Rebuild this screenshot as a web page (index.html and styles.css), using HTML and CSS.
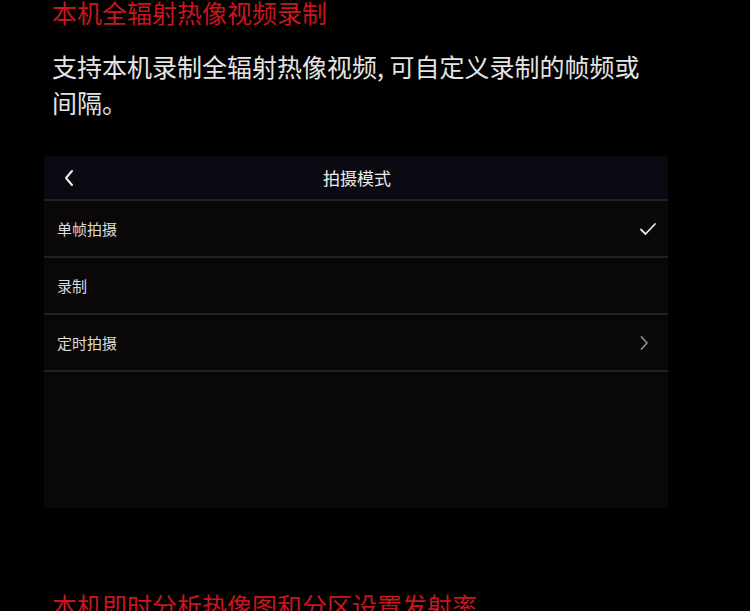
FILE: index.html
```html
<!DOCTYPE html>
<html lang="zh-CN">
<head>
  <meta charset="UTF-8">
  <meta name="viewport" content="width=device-width, initial-scale=1.0">
  <title>本机全辐射热像视频录制</title>
  <link rel="stylesheet" href="styles.css">
</head>
<body>
  <section class="feature first">
    <h2 class="feature-title">本机全辐射热像视频录制</h2>
    <p class="feature-text">支持本机录制全辐射热像视频, 可自定义录制的帧频或间隔。</p>
  </section>

  <div class="phone-panel">
    <div class="panel-header">
      <svg class="back-icon" width="12" height="18" viewBox="0 0 12 18">
        <path d="M9 2 L3 9 L9 16" fill="none" stroke="#f0f0f0" stroke-width="2" stroke-linecap="round" stroke-linejoin="round"/>
      </svg>
      <span class="panel-title">拍摄模式</span>
    </div>
    <div class="mode-row">
      <span>单帧拍摄</span>
      <svg width="18" height="14" viewBox="0 0 18 14">
        <path d="M2 7.5 L6.5 12 L16 2" fill="none" stroke="#e8e8e8" stroke-width="1.8" stroke-linecap="round" stroke-linejoin="round"/>
      </svg>
    </div>
    <div class="mode-row">
      <span>录制</span>
    </div>
    <div class="mode-row">
      <span>定时拍摄</span>
      <svg width="10" height="16" viewBox="0 0 10 16">
        <path d="M2.5 2 L8 8 L2.5 14" fill="none" stroke="#8a8a8a" stroke-width="1.8" stroke-linecap="round" stroke-linejoin="round"/>
      </svg>
    </div>
  </div>

  <section class="feature next">
    <h2 class="feature-title">本机即时分析热像图和分区设置发射率</h2>
  </section>
</body>
</html>
```

FILE: styles.css
```css
:root {
  --red: #c8161e;
  --text-light: #e4e4e4;
  --panel-bg: #0a0709;
  --header-bg: #0b0a12;
  --line: #222126;
}

* {
  box-sizing: border-box;
  margin: 0;
  padding: 0;
}

body {
  background-color: #000;
  font-family: "Noto Sans CJK SC", "Noto Sans", sans-serif;
  color: var(--text-light);
  overflow: hidden;
}

.feature {
  padding-left: 52px;
}

.first {
  margin-top: -2px;
}

.feature-title {
  color: var(--red);
  font-size: 25px;
  font-weight: 400;
  line-height: 28px;
}

.feature-text {
  margin-top: 22px;
  max-width: 612px;
  font-size: 25px;
  line-height: 36px;
}

/* screenshot of the camera menu */
.phone-panel {
  margin: 36px 0 0 44px;
  width: 624px;
  height: 352px;
  background-color: var(--panel-bg);
}

.panel-header {
  position: relative;
  height: 45px;
  background-color: var(--header-bg);
  border-bottom: 2px solid var(--line);
  display: flex;
  align-items: center;
  justify-content: center;
}

.back-icon {
  position: absolute;
  left: 19px;
  top: 13px;
}

.panel-title {
  font-size: 17px;
  color: #ececec;
  margin-left: 2px;
}

.mode-row {
  height: 57px;
  padding: 0 13px 0 13px;
  border-bottom: 2px solid var(--line);
  display: flex;
  align-items: center;
  justify-content: space-between;
  font-size: 15px;
  color: #dcdcdc;
}

.mode-row svg {
  margin-right: -2px;
}

.mode-row:last-child svg {
  margin-right: 6px;
}

.next {
  margin-top: 83px;
}
```
